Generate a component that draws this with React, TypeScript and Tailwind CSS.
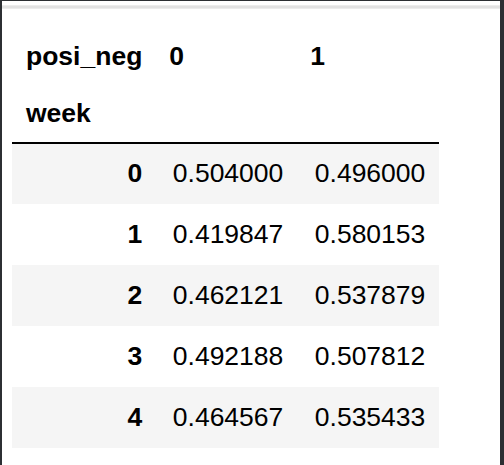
import React from "react";

const rows: [string, string, string][] = [
  ["0", "0.504000", "0.496000"],
  ["1", "0.419847", "0.580153"],
  ["2", "0.462121", "0.537879"],
  ["3", "0.492188", "0.507812"],
  ["4", "0.464567", "0.535433"],
];

export default function App() {
  return (
    <div
      className="w-[504px] h-[465px] bg-[#2c2f33] pt-[1px] pl-[2px] pr-[4px] flex overflow-hidden"
      style={{ fontFamily: '"Liberation Sans", Arial, sans-serif' }}
    >
      <div className="flex-1 bg-white flex flex-col">
        <div className="mt-[4px] h-[4px] bg-[#e2e2e2] border-y border-[#ececec]" />
        <div className="pt-[19px] pl-[10px]">
          <table className="table-fixed border-collapse text-[26.5px] text-black leading-normal">
            <colgroup>
              <col className="w-[144px]" />
              <col className="w-[141px]" />
              <col className="w-[142px]" />
            </colgroup>
            <thead>
              <tr className="h-[58px]">
                <th className="px-[14px] text-left font-bold">posi_neg</th>
                <th className="px-[13px] text-left font-bold">0</th>
                <th className="px-[13px] text-left font-bold">1</th>
              </tr>
              <tr className="h-[57px] border-b-2 border-black">
                <th className="px-[14px] text-left font-bold">week</th>
                <th />
                <th />
              </tr>
            </thead>
            <tbody>
              {rows.map((r, i) => (
                <tr
                  key={r[0]}
                  className={`h-[61px] ${i % 2 === 0 ? "bg-[#f5f5f5]" : "bg-white"}`}
                >
                  <th className="px-[14px] text-right font-bold">{r[0]}</th>
                  <td className="px-[14px] text-right">{r[1]}</td>
                  <td className="px-[14px] text-right">{r[2]}</td>
                </tr>
              ))}
            </tbody>
          </table>
        </div>
      </div>
    </div>
  );
}
